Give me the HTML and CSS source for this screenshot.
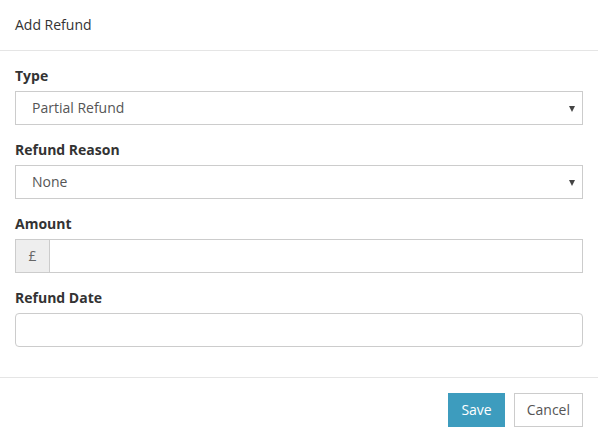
FILE: index.html
```html
<!DOCTYPE html>
<html>
<head>
<meta charset="utf-8">
<link rel="stylesheet" href="styles.css">
</head>
<body>
<div class="modal">
  <div class="modal-header">Add Refund</div>
  <div class="modal-body">
    <div class="form-group">
      <label class="label">Type</label>
      <div class="select"><span>Partial Refund</span><span class="caret"></span></div>
    </div>
    <div class="form-group">
      <label class="label">Refund Reason</label>
      <div class="select"><span>None</span><span class="caret"></span></div>
    </div>
    <div class="form-group">
      <label class="label">Amount</label>
      <div class="input-group">
        <span class="addon">£</span>
        <div class="input square"></div>
      </div>
    </div>
    <div class="form-group">
      <label class="label">Refund Date</label>
      <div class="input rounded"></div>
    </div>
  </div>
  <div class="modal-footer">
    <button class="btn btn-primary">Save</button>
    <button class="btn btn-default">Cancel</button>
  </div>
</div>
</body>
</html>
```
FILE: styles.css
```css
* { box-sizing: border-box; }
html, body { margin: 0; padding: 0; background: #fff; }
body {
  font-family: "Open Sans", "Liberation Sans", sans-serif;
  font-size: 14px;
  line-height: 20px;
  color: #333;
}
.modal { width: 598px; }
.modal-header {
  padding: 15px;
  height: 51px;
  border-bottom: 1px solid #e5e5e5;
}
.modal-body { padding: 15px; }
.form-group { margin-bottom: 15px; }
.label {
  display: block;
  font-weight: 700;
  margin-bottom: 5px;
  height: 20px;
}
.select {
  height: 34px;
  border: 1px solid #ccc;
  display: flex;
  align-items: center;
  justify-content: space-between;
  padding: 0 7px 0 16px;
  color: #555;
}
.caret {
  width: 0;
  height: 0;
  border-left: 3.5px solid transparent;
  border-right: 3.5px solid transparent;
  border-top: 6px solid #444;
  margin-top: 1px;
}
.input-group { display: flex; height: 34px; }
.addon {
  width: 34px;
  background: #eee;
  border: 1px solid #ccc;
  border-right: none;
  color: #666;
  display: flex;
  align-items: center;
  justify-content: center;
}
.input {
  height: 34px;
  border: 1px solid #ccc;
  flex: 1;
}
.rounded { border-radius: 4px; }
.modal-footer {
  border-top: 1px solid #e5e5e5;
  padding: 15px;
  display: flex;
  justify-content: flex-end;
  gap: 9px;
}
.btn {
  font-family: inherit;
  font-size: 14px;
  line-height: 20px;
  height: 34px;
  padding: 6px 12px;
  border: 1px solid transparent;
  border-radius: 0;
  margin: 0;
}
.btn-primary { background: #3d9cbe; color: #fff; border-color: #3d9cbe; }
.btn-default { background: #fff; color: #555; border-color: #ccc; }
```
